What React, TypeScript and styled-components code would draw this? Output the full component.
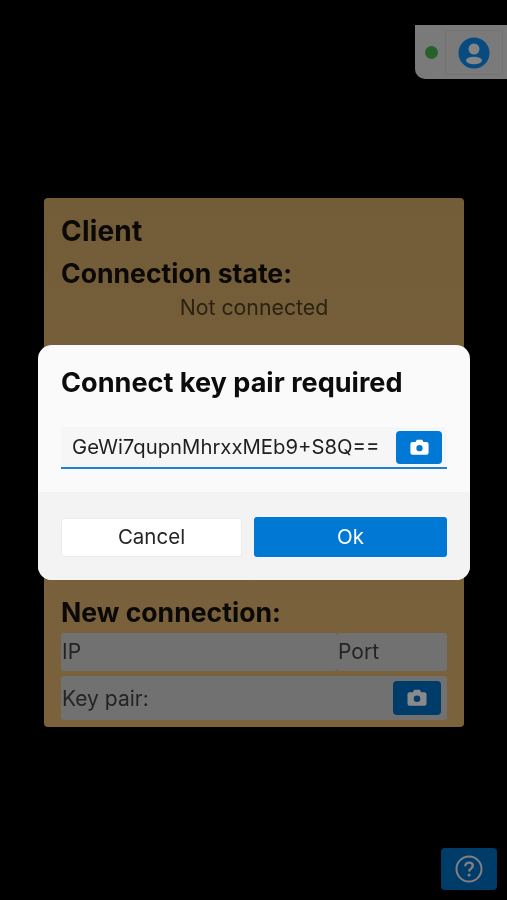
import React from "react";
import styled, { createGlobalStyle } from "styled-components";

const Global = createGlobalStyle`
  html, body { margin: 0; padding: 0; background: #000; }
  * { box-sizing: border-box; }
  #root { font-family: Inter, "Open Sans", "Liberation Sans", sans-serif; }
`;

const Page = styled.div`
  position: relative;
  width: 507px;
  height: 900px;
  overflow: hidden;
  background: #000;
  padding: 198px 43px 0 44px;
  filter: blur(0.4px);
`;

const Card = styled.section`
  height: 529px;
  border-radius: 4px;
  background: linear-gradient(#735c38, #7a623d);
  padding: 17px 17px 0 17px;
  display: flex;
  flex-direction: column;
  color: #0b0906;
`;

const ClientTitle = styled.h1`
  margin: 0;
  font-size: 28px;
  line-height: 33px;
  font-weight: 700;
  letter-spacing: 0.2px;
`;

const SectionTitle = styled.h2`
  margin: 9px 0 0;
  font-size: 26.6px;
  line-height: 32px;
  font-weight: 700;
`;

const StateText = styled.div`
  margin-top: 3px;
  text-align: center;
  font-size: 21.3px;
  line-height: 30px;
  color: #2b2213;
`;

const Spacer = styled.div`
  flex: none;
  height: 265px;
`;

const FieldRow = styled.div`
  display: flex;
  margin-top: 5px;
`;

const GreyField = styled.div<{ $width?: number; $height?: number }>`
  flex: ${(p) => (p.$width ? `0 0 ${p.$width}px` : "1")};
  height: ${(p) => p.$height ?? 38}px;
  background: #717171;
  border-radius: 3px;
  padding: 0 1px 2px;
  display: flex;
  align-items: center;
  justify-content: space-between;
  font-size: 21px;
  color: #242424;
`;

const KeyField = styled(GreyField)`
  padding: 0 6px 0 1px;
`;

const CamButton = styled.div<{ $dim?: boolean; $w: number; $h: number }>`
  width: ${(p) => p.$w}px;
  height: ${(p) => p.$h}px;
  flex: none;
  border-radius: 4px;
  background: ${(p) => (p.$dim ? "#003c6a" : "#0078d4")};
  color: ${(p) => (p.$dim ? "#8a8a8a" : "#fff")};
  display: flex;
  align-items: center;
  justify-content: center;
`;

const Overlay = styled.div`
  position: absolute;
  left: 38px;
  top: 345px;
  width: 432px;
  height: 235px;
  border-radius: 14px;
  overflow: hidden;
  display: flex;
  flex-direction: column;
  background: #fafafa;
`;

const DialogBody = styled.div`
  height: 147px;
  padding: 21px 23px 0;
`;

const DialogTitle = styled.h2`
  margin: 0;
  font-size: 27.1px;
  line-height: 34px;
  font-weight: 700;
  color: #0c0c0c;
`;

const TextInput = styled.div`
  margin-top: 27px;
  height: 42px;
  background: #f6f6f6;
  border-radius: 3px 3px 0 0;
  border-bottom: 2px solid #1e80d6;
  padding: 0 5px 0 11px;
  display: flex;
  align-items: center;
  justify-content: space-between;
  font-size: 20.3px;
  line-height: 38px;
  color: #1f1f1f;
`;

const DialogFooter = styled.div`
  flex: 1;
  background: #f3f3f3;
  padding: 25px 23px 0;
  display: flex;
  gap: 12px;
  align-items: flex-start;
`;

const CancelButton = styled.div`
  width: 181px;
  height: 39px;
  margin-top: 1px;
  padding-bottom: 2px;
  border-radius: 3px;
  background: #fff;
  border: 1px solid #ececec;
  display: flex;
  align-items: center;
  justify-content: center;
  font-size: 20.5px;
  color: #242424;
`;

const OkButton = styled.div`
  flex: 1;
  height: 40px;
  padding-bottom: 2px;
  border-radius: 3px;
  background: #0078d4;
  display: flex;
  align-items: center;
  justify-content: center;
  font-size: 20.5px;
  color: #fff;
`;

const StatusPanel = styled.div`
  position: absolute;
  top: 25px;
  right: 0;
  width: 92px;
  height: 54px;
  background: #7a7a7a;
  border-radius: 0 0 0 10px;
  padding: 5px 4px 4px 10px;
  display: flex;
  align-items: center;
  gap: 7px;
`;

const Dot = styled.span`
  width: 13px;
  height: 13px;
  border-radius: 50%;
  background: #27602a;
  flex: none;
`;

const AvatarBox = styled.div`
  flex: 1;
  height: 100%;
  border: 1px solid #727272;
  border-radius: 3px;
  display: flex;
  align-items: center;
  justify-content: center;
`;

const HelpButton = styled.div`
  position: absolute;
  left: 441px;
  top: 848px;
  width: 56px;
  height: 42px;
  border-radius: 4px;
  background: #003c6a;
  display: flex;
  align-items: center;
  justify-content: center;
`;

const CameraIcon = ({ size }: { size: number }) => (
  <svg width={size} height={size} viewBox="0 0 24 24" aria-hidden="true">
    <path
      fill="currentColor"
      fillRule="evenodd"
      d="M9 3h6l1.6 2.6H20a2.4 2.4 0 0 1 2.4 2.4v10a2.4 2.4 0 0 1-2.4 2.4H4A2.4 2.4 0 0 1 1.600 18V8A2.400 2.400 0 0 1 4 5.600h3.400L9 3Zm3 6.200a3.600 3.600 0 1 0 0 7.200 3.600 3.600 0 0 0 0-7.200Z"
    />
  </svg>
);

const AvatarIcon = () => (
  <svg width="32" height="32" viewBox="0 0 32 32" aria-hidden="true">
    <circle cx="16" cy="16" r="15.500" fill="#084b80" />
    <circle cx="16" cy="12" r="5.500" fill="#858585" />
    <ellipse cx="16" cy="23.500" rx="8" ry="3.800" fill="#858585" />
  </svg>
);

const HelpIcon = () => (
  <svg width="28" height="28" viewBox="0 0 28 28" aria-hidden="true">
    <circle cx="14" cy="14" r="12.500" fill="none" stroke="#808080" strokeWidth="2" />
    <path
      d="M10.300 11.200c0-2.200 1.600-3.600 3.800-3.600s3.700 1.300 3.700 3.200c0 2.700-3.700 2.900-3.700 5.600"
      fill="none"
      stroke="#808080"
      strokeWidth="2.400"
    />
    <circle cx="14.100" cy="20" r="1.600" fill="#808080" />
  </svg>
);

export default function App() {
  return (
    <Page>
      <Global />
      <Card>
        <ClientTitle>Client</ClientTitle>
        <SectionTitle>Connection state:</SectionTitle>
        <StateText>Not connected</StateText>
        <Spacer />
        <SectionTitle>New connection:</SectionTitle>
        <FieldRow>
          <GreyField $width={276}>IP</GreyField>
          <GreyField>Port</GreyField>
        </FieldRow>
        <FieldRow>
          <KeyField $height={44}>
            Key pair:
            <CamButton $dim $w={48} $h={34}>
              <CameraIcon size={22} />
            </CamButton>
          </KeyField>
        </FieldRow>
      </Card>
      <Overlay>
        <DialogBody>
          <DialogTitle>Connect key pair required</DialogTitle>
          <TextInput>
            GeWi7qupnMhrxxMEb9+S8Q==
            <CamButton $w={46} $h={33}>
              <CameraIcon size={21} />
            </CamButton>
          </TextInput>
        </DialogBody>
        <DialogFooter>
          <CancelButton>Cancel</CancelButton>
          <OkButton>Ok</OkButton>
        </DialogFooter>
      </Overlay>
      <StatusPanel>
        <Dot />
        <AvatarBox>
          <AvatarIcon />
        </AvatarBox>
      </StatusPanel>
      <HelpButton>
        <HelpIcon />
      </HelpButton>
    </Page>
  );
}
